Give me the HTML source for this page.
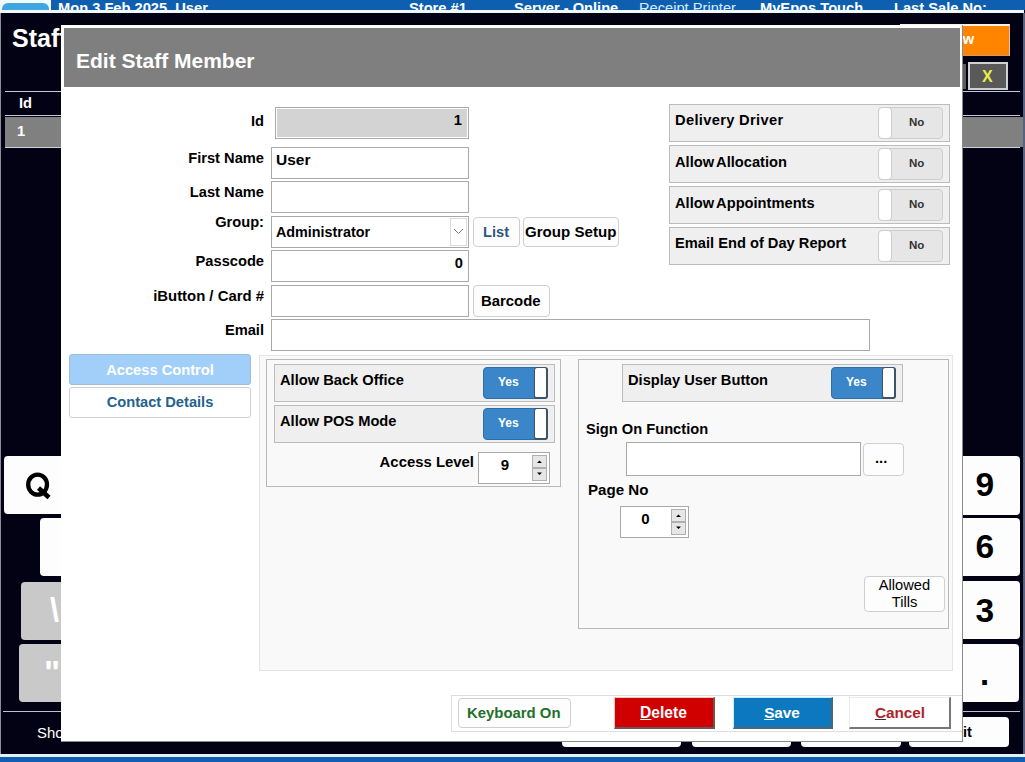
<!DOCTYPE html>
<html><head><meta charset="utf-8">
<style>
*{box-sizing:border-box;margin:0;padding:0}
html,body{width:1025px;height:762px;overflow:hidden}
body{position:relative;background:#030214;font-family:"Liberation Sans",sans-serif;font-size:14.67px;color:#000}
.a{position:absolute}
.t{position:absolute;white-space:pre;line-height:1}
.b{font-weight:bold}

.key{position:absolute;background:#fdfdfd;border-radius:4px}
.gkey{position:absolute;background:#c9c9c9;border-radius:4px}
.inp{position:absolute;background:#fff;border:1px solid #a9a9a9}
.btn{position:absolute;background:#fdfdfd;border:1px solid #cfcfcf;border-radius:4px}
.row{position:absolute;background:#efefef;border:1px solid #bcbcbc}
.no{position:absolute;background:#e6e6e6;border:1px solid #cdcdcd;border-radius:4px;width:65px;height:32px}
.no .k{position:absolute;left:-1px;top:-1px;width:14px;height:32px;background:#fff;border:1px solid #cdcdcd;border-radius:4px}
.no .l{position:absolute;left:30px;top:8.5px;font-size:11.5px;font-weight:bold;color:#333;line-height:1}
.yes{position:absolute;background:#3a86c8;border:1px solid #2f6ea6;border-radius:4px;width:65px;height:32px}
.yes .k{position:absolute;right:-1px;top:-1px;width:14px;height:32px;background:#fff;border:1px solid #3d5468;border-width:1px 2px 2px 1px;border-radius:3px}
.yes .l{position:absolute;left:14px;top:8px;font-size:12px;font-weight:bold;color:#fff;line-height:1}
</style></head><body>

<!-- top status bar -->
<div class="a" style="left:0;top:0;width:51px;height:10px;background:#f4fbff"></div>
<div class="a" style="left:2px;top:3px;width:47px;height:8px;background:#3ea7df;border-radius:6px 6px 0 0"></div>
<div class="a" style="left:51px;top:0;width:974px;height:10px;background:#0f5fb0;overflow:hidden">
  <span class="t b" style="left:7px;top:0.5px;color:#fff;font-size:14.67px">Mon 3 Feb 2025  User</span>
  <span class="t b" style="left:358px;top:0.5px;color:#fff">Store #1</span>
  <span class="t b" style="left:463px;top:0.5px;color:#fff">Server - Online</span>
  <span class="t" style="left:588px;top:0.5px;color:#d8ecff">Receipt Printer</span>
  <span class="t b" style="left:709px;top:0.5px;color:#fff">MyEpos Touch</span>
  <span class="t b" style="left:843px;top:0.5px;color:#fff">Last Sale No:</span>
</div>
<div class="a" style="left:0;top:10px;width:1024px;height:3px;background:#eef8ff"></div>
<div class="a" style="left:0;top:13px;width:1px;height:741px;background:#8c8c9c"></div>
<div class="a" style="left:1023px;top:13px;width:2px;height:749px;background:#56627e"></div>

<!-- background screen -->
<span class="t b" style="left:12px;top:26px;color:#fff;font-size:25px">Staff</span>
<div class="a" style="left:900px;top:24px;width:110px;height:32px;background:#ff8500;border-top:2px solid #fbf1e4;border-right:1px solid #d8c4b0;border-bottom:1px solid #d09a60;overflow:hidden"><span class="t b" style="left:44px;top:6px;color:#fff;font-size:14.67px">New</span></div>
<div class="a" style="left:940px;top:64px;width:26px;height:25px;background:#5c5c5c"></div>
<div class="a" style="left:968px;top:62px;width:40px;height:28px;background:#595959;border:2px solid #d0d0d0"><span class="t b" style="left:12px;top:5px;color:#eded4a;font-size:16px">X</span></div>
<div class="a" style="left:5px;top:91px;width:1015px;height:1px;background:#c8c8d8"></div>
<span class="t b" style="left:19px;top:96px;color:#fff;font-size:14.67px">Id</span>
<div class="a" style="left:5px;top:115px;width:1015px;height:1px;background:#c8c8d8"></div>
<div class="a" style="left:5px;top:117px;width:1018px;height:30px;background:#808080"></div>
<span class="t b" style="left:17px;top:123.5px;color:#fff;font-size:14.67px">1</span>
<div class="a" style="left:5px;top:147px;width:1015px;height:1px;background:#d0d0d8"></div>

<!-- keyboard -->
<div class="key" style="left:4px;top:456px;width:120px;height:58px"><svg class="a" style="left:0;top:0" width="60" height="58"><ellipse cx="33.6" cy="28.6" rx="9.4" ry="10" fill="none" stroke="#000" stroke-width="4.3"/><path d="M34.5 32 L45 41.5" stroke="#000" stroke-width="4.6" stroke-linecap="butt"/></svg></div>
<div class="key" style="left:40px;top:518px;width:120px;height:58px"></div>
<div class="gkey" style="left:21px;top:582px;width:120px;height:58px"><span class="t b" style="left:29px;top:12px;color:#fff;font-size:32.5px">\</span></div>
<div class="gkey" style="left:19px;top:644px;width:120px;height:58px"><span class="t b" style="left:25px;top:11px;color:#fff;font-size:34px">"</span></div>
<div class="key" style="left:900px;top:456px;width:120px;height:59px"><span class="t b" style="left:75.5px;top:12px;font-size:33.5px">9</span></div>
<div class="key" style="left:900px;top:518px;width:120px;height:58px"><span class="t b" style="left:75.5px;top:12px;font-size:33.5px">6</span></div>
<div class="key" style="left:900px;top:581px;width:120px;height:58px"><span class="t b" style="left:75.5px;top:12.5px;font-size:33.5px">3</span></div>
<div class="key" style="left:900px;top:644px;width:119px;height:58px"><span class="t b" style="left:80px;top:13px;font-size:33px">.</span></div>
<div class="a" style="left:3px;top:711px;width:1017px;height:1px;background:#c0c0c8"></div>
<span class="t" style="left:37px;top:725.5px;color:#fff;font-size:14.9px">Show</span>
<div class="key" style="left:562px;top:717px;width:119px;height:30px"></div>
<div class="key" style="left:692px;top:717px;width:99px;height:30px"></div>
<div class="key" style="left:801px;top:717px;width:100px;height:30px"></div>
<div class="key" style="left:909px;top:717px;width:100px;height:30px"><span class="t b" style="left:36px;top:8px;font-size:14.67px">Exit</span></div>
<div class="a" style="left:0;top:754px;width:1025px;height:3px;background:#e8eef8"></div>
<div class="a" style="left:0;top:757px;width:1025px;height:5px;background:#0f5fb0"></div>

<!-- dialog -->
<div id="dlg" class="a" style="left:61px;top:25px;width:902px;height:717px;background:#fff;border-bottom:1px solid #8a8a8a;border-right:1px solid #8a8a8a">
  <div class="a" style="left:3px;top:3px;width:896px;height:59px;background:#7f7f7f"></div>
  <span class="t b" style="left:15px;top:25px;color:#fff;font-size:21px">Edit Staff Member</span>
</div>


<!-- form left -->
<span class="t b" style="right:761px;top:114px">Id</span>
<span class="t b" style="right:761px;top:150.5px">First Name</span>
<span class="t b" style="right:761px;top:185px">Last Name</span>
<span class="t b" style="right:761px;top:215px">Group:</span>
<span class="t b" style="right:761px;top:254px">Passcode</span>
<span class="t b" style="right:761px;top:289px;font-size:14.9px">iButton / Card #</span>
<span class="t b" style="right:761px;top:323px">Email</span>

<div class="inp" style="left:275px;top:107px;width:194px;height:32px;background:#d3d3d3;box-shadow:inset 1px 1px 0 #fff, inset -1px -1px 0 #fff"></div>
<span class="t b" style="right:563px;top:113px">1</span>
<div class="inp" style="left:271px;top:147px;width:198px;height:32px"></div>
<span class="t b" style="left:276px;top:151.5px;font-size:15.5px">User</span>
<div class="inp" style="left:271px;top:181px;width:198px;height:32px"></div>
<div class="inp" style="left:271px;top:216px;width:198px;height:32px"></div>
<span class="t b" style="left:276px;top:225px;font-size:14.35px">Administrator</span>
<div class="a" style="left:450px;top:218px;width:17px;height:28px;border:1px solid #dcdcdc;background:#fff"></div>
<svg class="a" style="left:453px;top:228px" width="11" height="7"><path d="M1 1 L5.5 5.5 L10 1" fill="none" stroke="#777" stroke-width="1"/></svg>
<div class="btn" style="left:473px;top:217px;width:47px;height:30px"></div>
<span class="t b" style="left:483px;top:225px;color:#2e587e">List</span>
<div class="btn" style="left:523px;top:217px;width:96px;height:30px"></div>
<span class="t b" style="left:525px;top:224px;font-size:15.1px">Group Setup</span>
<div class="inp" style="left:271px;top:250px;width:198px;height:32px"></div>
<span class="t b" style="right:562px;top:255.5px">0</span>
<div class="inp" style="left:271px;top:285px;width:198px;height:32px"></div>
<div class="btn" style="left:473px;top:285px;width:77px;height:32px"></div>
<span class="t b" style="left:481px;top:294px;font-size:14.9px">Barcode</span>
<div class="inp" style="left:271px;top:319px;width:599px;height:32px"></div>

<!-- right toggles -->
<div class="row" style="left:669px;top:104px;width:281px;height:38px"></div>
<span class="t b" style="left:675px;top:113px;letter-spacing:0.33px">Delivery Driver</span>
<div class="no" style="left:878px;top:107px"><div class="k"></div><span class="l">No</span></div>
<div class="row" style="left:669px;top:145px;width:281px;height:38px"></div>
<span class="t b" style="left:675px;top:154.5px;word-spacing:-1.5px">Allow Allocation</span>
<div class="no" style="left:878px;top:148px"><div class="k"></div><span class="l">No</span></div>
<div class="row" style="left:669px;top:186px;width:281px;height:38px"></div>
<span class="t b" style="left:675px;top:195.5px;word-spacing:-1.5px">Allow Appointments</span>
<div class="no" style="left:878px;top:189px"><div class="k"></div><span class="l">No</span></div>
<div class="row" style="left:669px;top:227px;width:281px;height:38px"></div>
<span class="t b" style="left:675px;top:236px">Email End of Day Report</span>
<div class="no" style="left:878px;top:230px"><div class="k"></div><span class="l">No</span></div>

<!-- tabs -->
<div class="a" style="left:69px;top:354px;width:182px;height:31px;background:#a2cff9;border:1px solid #a0bcd8;border-radius:3px"></div>
<span class="t b" style="left:69px;width:182px;text-align:center;top:363px;color:#fff">Access Control</span>
<div class="a" style="left:69px;top:387px;width:182px;height:31px;background:#fff;border:1px solid #cfcfcf;border-radius:3px"></div>
<span class="t b" style="left:69px;width:182px;text-align:center;top:395px;color:#23628c">Contact Details</span>

<!-- panel -->
<div class="a" style="left:259px;top:355px;width:694px;height:316px;background:#f9f9f9;border:1px solid #e4e4e4"></div>
<div class="a" style="left:266px;top:359px;width:295px;height:128px;border:1px solid #b8b8b8"></div>
<div class="row" style="left:274px;top:364px;width:281px;height:38px"></div>
<span class="t b" style="left:280px;top:373.3px">Allow Back Office</span>
<div class="yes" style="left:483px;top:367px"><span class="l">Yes</span><div class="k"></div></div>
<div class="row" style="left:274px;top:405px;width:281px;height:38px"></div>
<span class="t b" style="left:280px;top:414.3px">Allow POS Mode</span>
<div class="yes" style="left:483px;top:408px"><span class="l">Yes</span><div class="k"></div></div>
<span class="t b" style="right:551px;top:455px;font-size:14.9px">Access Level</span>
<div class="inp" style="left:478px;top:452px;width:72px;height:32px"></div>
<span class="t b" style="left:478px;width:54px;text-align:center;top:457px;font-size:15px">9</span>
<div class="a" style="left:532px;top:455px;width:15px;height:13px;background:#e6e6e6;border:1px solid #b0b0b0"></div>
<div class="a" style="left:532px;top:468px;width:15px;height:13px;background:#e6e6e6;border:1px solid #b0b0b0"></div>
<svg class="a" style="left:535px;top:458px" width="9" height="20"><path d="M2 5 L4.5 2.5 L7 5 Z M2 14.5 L4.5 17 L7 14.5 Z" fill="#000"/></svg>

<div class="a" style="left:578px;top:359px;width:371px;height:270px;border:1px solid #b8b8b8"></div>
<div class="row" style="left:622px;top:364px;width:281px;height:38px"></div>
<span class="t b" style="left:628px;top:373.3px">Display User Button</span>
<div class="yes" style="left:831px;top:367px"><span class="l">Yes</span><div class="k"></div></div>
<span class="t b" style="left:586px;top:422px">Sign On Function</span>
<div class="inp" style="left:626px;top:442px;width:235px;height:34px"></div>
<div class="btn" style="left:863px;top:443px;width:41px;height:33px"></div>
<span class="t b" style="left:875px;top:451px">...</span>
<span class="t b" style="left:588px;top:482px;font-size:15.1px">Page No</span>
<div class="inp" style="left:620px;top:506px;width:69px;height:32px"></div>
<span class="t b" style="left:620px;width:51px;text-align:center;top:511px;font-size:15px">0</span>
<div class="a" style="left:671px;top:509px;width:15px;height:13px;background:#e6e6e6;border:1px solid #b0b0b0"></div>
<div class="a" style="left:671px;top:522px;width:15px;height:13px;background:#e6e6e6;border:1px solid #b0b0b0"></div>
<svg class="a" style="left:674px;top:512px" width="9" height="20"><path d="M2 5 L4.5 2.5 L7 5 Z M2 14.5 L4.5 17 L7 14.5 Z" fill="#000"/></svg>
<div class="btn" style="left:864px;top:576px;width:81px;height:36px"></div>
<div class="t" style="left:864px;width:81px;text-align:center;top:577px;line-height:17px">Allowed<br>Tills</div>

<!-- footer -->
<div class="a" style="left:451px;top:695px;width:511px;height:37px;border:1px solid #dedede;border-right:none"></div>
<div class="btn" style="left:458px;top:698px;width:113px;height:30px"></div>
<span class="t b" style="left:467px;top:706px;color:#22702a;font-size:14.9px">Keyboard On</span>
<div class="a" style="left:614px;top:697px;width:101px;height:32px;background:#d00000;border-style:solid;border-width:1px 2px 2px 1px;border-color:#f4c8c8 #6e5454 #6e5454 #f4c8c8"></div>
<span class="t b" style="left:613px;width:101px;text-align:center;top:705px;color:#fff;font-size:15.6px"><u>D</u>elete</span>
<div class="a" style="left:733px;top:697px;width:100px;height:32px;background:#0b78c0;border-style:solid;border-width:1px 2px 2px 1px;border-color:#c8efff #4d6575 #4d6575 #c8efff"></div>
<span class="t b" style="left:732px;width:100px;text-align:center;top:705px;color:#fff;font-size:15.3px"><u>S</u>ave</span>
<div class="a" style="left:849px;top:697px;width:102px;height:32px;background:#fff;border-style:solid;border-width:1px 2px 2px 1px;border-color:#eaeaea #777 #777 #eaeaea"></div>
<span class="t b" style="left:849px;width:102px;text-align:center;top:704.5px;color:#b01f2c;font-size:15.3px"><u style="text-decoration-color:#333">C</u>ancel</span>

</body></html>
